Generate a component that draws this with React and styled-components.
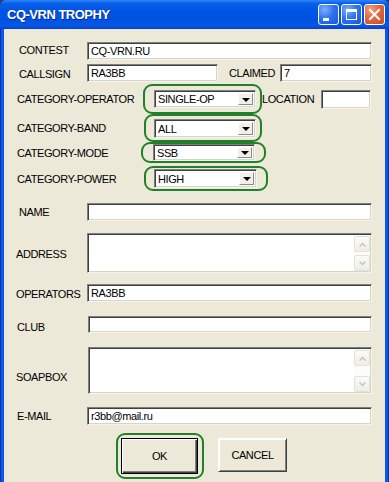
import React from 'react';
import styled, { createGlobalStyle } from 'styled-components';

const Global = createGlobalStyle`
  html, body { margin: 0; padding: 0; background: #2a3c6a; }
  body { width: 389px; height: 482px; overflow: hidden; font-family: "Liberation Sans", Arial, sans-serif; }
  * { box-sizing: border-box; }
`;

const Win = styled.div`
  width: 389px;
  height: 482px;
  display: flex;
  flex-direction: column;
  overflow: hidden;
  border-radius: 6px 6px 0 0;
  background: linear-gradient(90deg, #0a2fb0 0, #0a2fb0 1px, #0b58e6 1px, #0b58e6 calc(100% - 1px), #0a2fb0 calc(100% - 1px));
`;

const TitleBar = styled.div`
  height: 29px;
  flex: none;
  display: flex;
  align-items: center;
  padding: 0 4px 0 7px;
  background: linear-gradient(180deg, #2b86ff 0%, #0a5fe8 12%, #0055e5 35%, #0052e0 70%, #0458e8 88%, #0a3fc8 100%);
`;

const Title = styled.span`
  flex: 1;
  color: #fff;
  font-weight: bold;
  font-size: 13px;
  letter-spacing: -0.5px;
  text-shadow: 1px 1px 0 #0b2a8a;
  margin-top: -1px;
`;

const CapButton = styled.div`
  width: 21px;
  height: 21px;
  margin-left: 2px;
  border: 1px solid #fff;
  border-radius: 3px;
  display: flex;
  align-items: center;
  justify-content: center;
  background: ${p => p.$close
    ? 'radial-gradient(circle at 30% 25%, #f0a080 0%, #e2663e 45%, #c84a22 100%)'
    : 'radial-gradient(circle at 30% 25%, #7fb0ff 0%, #2f74f0 45%, #1a55d8 100%)'};
`;

const Client = styled.div`
  flex: 1;
  margin: 0 4px;
  background: #ece9d8;
  display: flex;
  flex-direction: column;
  padding: 13px 13px 0 12px;
  font-size: 11px;
  letter-spacing: -0.4px;
  color: #000;
`;

const Row = styled.div`
  display: flex;
  align-items: center;
  height: ${p => p.$h}px;
  margin-top: ${p => p.$mt || 0}px;
  flex: none;
`;

const Label = styled.div`
  width: ${p => (p.$w ? `${p.$w}px` : 'auto')};
  flex: none;
  padding-left: ${p => p.$dx || 0}px;
  padding-top: ${p => Math.max(0, p.$shift || 0) * 2}px;
  padding-bottom: ${p => Math.max(0, -(p.$shift || 0)) * 2}px;
  margin-left: ${p => p.$ml || 0}px;
  white-space: nowrap;
`;

const sunken = `
  background: #fff;
  border: 1px solid;
  border-color: #7f7f7f #f4f3ee #f4f3ee #7f7f7f;
  box-shadow: inset 1px 1px 0 #404040, inset -1px -1px 0 #d8d5c8;
`;

const Field = styled.input`
  ${sunken}
  height: ${p => (p.$h ? `${p.$h}px` : '100%')};
  width: ${p => (p.$w ? `${p.$w}px` : 'auto')};
  flex: ${p => (p.$w ? 'none' : '1')};
  min-width: 0;
  margin: 0;
  margin-left: ${p => p.$ml || 0}px;
  padding: 0 2px 0 3px;
  font: inherit;
  letter-spacing: inherit;
  color: #000;
  outline: none;
`;

const Area = styled.div`
  ${sunken}
  flex: 1;
  height: 100%;
  display: flex;
  padding: 2px 1px 1px 2px;
`;

const AreaText = styled.textarea`
  flex: 1;
  border: none;
  resize: none;
  outline: none;
  background: transparent;
  font: inherit;
  margin: 0;
  padding: 0;
`;

const ScrollBar = styled.div`
  width: 16px;
  flex: none;
  display: flex;
  flex-direction: column;
  justify-content: space-between;
  background: #fcfcfa;
`;

const ScrollBtn = styled.div`
  height: 16px;
  border: 1px solid #e3e1d6;
  border-radius: 2px;
  background: linear-gradient(180deg, #fbfbf8, #eeede6);
  display: flex;
  align-items: center;
  justify-content: center;
`;

const Ring = styled.div`
  width: ${p => p.$w}px;
  height: 100%;
  margin-left: ${p => p.$ml || 0}px;
  border: 2px solid #22802a;
  border-radius: 9px;
  display: flex;
  align-items: center;
  padding-left: ${p => p.$pl}px;
  flex: none;
`;

const Combo = styled.div`
  ${sunken}
  width: ${p => p.$w || 102}px;
  height: ${p => p.$h || 18}px;
  display: flex;
  align-items: stretch;
  padding: 2px 2px 2px 3px;
`;

const ComboText = styled.div`
  flex: 1;
  line-height: ${p => (p.$h || 18) - 5}px;
`;

const DropBtn = styled.div`
  width: 15px;
  flex: none;
  background: #f0efe9;
  border: 1px solid;
  border-color: #ffffff #8a8a8a #8a8a8a #ffffff;
  display: flex;
  align-items: center;
  justify-content: center;
  &::after {
    content: "";
    border-left: 4px solid transparent;
    border-right: 4px solid transparent;
    border-top: 4px solid #000;
    margin-top: 1px;
  }
`;

const ButtonRow = styled.div`
  display: flex;
  align-items: flex-start;
  margin-top: 8px;
  padding-left: 100px;
  flex: none;
`;

const ButtonRing = styled.div`
  width: 88px;
  height: 46px;
  border: 2px solid #22802a;
  border-radius: 9px;
  padding: 3px 0 0 3px;
  flex: none;
`;

const Button = styled.div`
  width: ${p => p.$w}px;
  height: ${p => p.$h}px;
  margin-left: ${p => p.$ml || 0}px;
  margin-top: ${p => p.$mt || 0}px;
  display: flex;
  align-items: center;
  justify-content: center;
  background: #ece9d8;
  border: 1px solid;
  border-color: ${p => (p.$default ? '#000' : '#fff #404040 #404040 #fff')};
  box-shadow: ${p => (p.$default
    ? 'inset 1px 1px 0 #fff, inset -1px -1px 0 #404040, inset -2px -2px 0 #808080'
    : 'inset 1px 1px 0 #fff, inset -1px -1px 0 #808080')};
`;

function Chevron({ up }) {
  return (
    <svg width="7" height="5" viewBox="0 0 7 5">
      <polyline
        points={up ? '0.5,4.5 3.5,1.5 6.5,4.5' : '0.5,0.5 3.5,3.5 6.5,0.5'}
        fill="none"
        stroke="#c6c4b8"
        strokeWidth="1.5"
      />
    </svg>
  );
}

function TextBox({ value = '' }) {
  return (
    <Area>
      <AreaText readOnly value={value} />
      <ScrollBar>
        <ScrollBtn><Chevron up /></ScrollBtn>
        <ScrollBtn><Chevron /></ScrollBtn>
      </ScrollBar>
    </Area>
  );
}

function Select({ value, w, h }) {
  return (
    <Combo $w={w} $h={h}>
      <ComboText $h={h}>{value}</ComboText>
      <DropBtn />
    </Combo>
  );
}

const categories = [
  { label: 'CATEGORY-OPERATOR', value: 'SINGLE-OP', mt: 2, h: 30, ring: { ml: 0, w: 119, pl: 9 }, sel: { w: 102, h: 18 }, location: true },
  { label: 'CATEGORY-BAND', value: 'ALL', mt: 0, h: 28, ring: { ml: 1, w: 118, pl: 8 }, sel: { w: 102, h: 19 } },
  { label: 'CATEGORY-MODE', value: 'SSB', mt: 0, h: 21, ring: { ml: -2, w: 125, pl: 10 }, sel: { w: 102, h: 17 } },
  { label: 'CATEGORY-POWER', value: 'HIGH', mt: 3, h: 25, ring: { ml: 1, w: 124, pl: 8 }, sel: { w: 103, h: 19 } },
];

export default function App() {
  return (
    <>
      <Global />
      <Win>
        <TitleBar>
          <Title>CQ-VRN TROPHY</Title>
          <CapButton>
            <svg width="19" height="19" viewBox="0 0 19 19">
              <rect x="4" y="13" width="6" height="3" fill="#fff" />
            </svg>
          </CapButton>
          <CapButton>
            <svg width="19" height="19" viewBox="0 0 19 19">
              <rect x="4.5" y="4.5" width="10" height="10" fill="none" stroke="#fff" strokeWidth="1" />
              <rect x="4" y="4" width="11" height="3" fill="#fff" />
            </svg>
          </CapButton>
          <CapButton $close>
            <svg width="19" height="19" viewBox="0 0 19 19">
              <path d="M5 5 L14 14 M14 5 L5 14" stroke="#fff" strokeWidth="2" strokeLinecap="square" />
            </svg>
          </CapButton>
        </TitleBar>
        <Client>
          <Row $h={18}>
            <Label $w={71} $dx={3} $shift={-1}>CONTEST</Label>
            <Field readOnly defaultValue="CQ-VRN.RU" />
          </Row>
          <Row $h={18} $mt={4}>
            <Label $w={71} $dx={3} $shift={1}>CALLSIGN</Label>
            <Field readOnly defaultValue="RA3BB" $w={131} />
            <Label $w={51} $ml={11}>CLAIMED</Label>
            <Field readOnly defaultValue="7" />
          </Row>
          {categories.map(c => (
            <Row key={c.label} $h={c.h} $mt={c.mt}>
              <Label $w={127} $dx={1}>{c.label}</Label>
              <Ring $ml={c.ring.ml} $w={c.ring.w} $pl={c.ring.pl}>
                <Select value={c.value} w={c.sel.w} h={c.sel.h} />
              </Ring>
              {c.location && (
                <>
                  <Label $w={59}>LOCATION</Label>
                  <Field readOnly defaultValue="" $w={50} $h={19} />
                </>
              )}
            </Row>
          ))}
          <Row $h={18} $mt={12}>
            <Label $w={71} $dx={3}>NAME</Label>
            <Field readOnly defaultValue="" />
          </Row>
          <Row $h={40} $mt={12}>
            <Label $w={71} $shift={1}>ADDRESS</Label>
            <TextBox />
          </Row>
          <Row $h={18} $mt={11}>
            <Label $w={71} $shift={1}>OPERATORS</Label>
            <Field readOnly defaultValue="RA3BB" />
          </Row>
          <Row $h={17} $mt={14}>
            <Label $w={72} $dx={1} $shift={2}>CLUB</Label>
            <Field readOnly defaultValue="" />
          </Row>
          <Row $h={47} $mt={14}>
            <Label $w={72} $shift={6}>SOAPBOX</Label>
            <TextBox />
          </Row>
          <Row $h={18} $mt={13}>
            <Label $w={71} $dx={1}>E-MAIL</Label>
            <Field readOnly defaultValue="r3bb@mail.ru" />
          </Row>
          <ButtonRow>
            <ButtonRing>
              <Button $default $w={77} $h={36}>OK</Button>
            </ButtonRing>
            <Button $w={69} $h={34} $ml={14} $mt={5}>CANCEL</Button>
          </ButtonRow>
        </Client>
      </Win>
    </>
  );
}
